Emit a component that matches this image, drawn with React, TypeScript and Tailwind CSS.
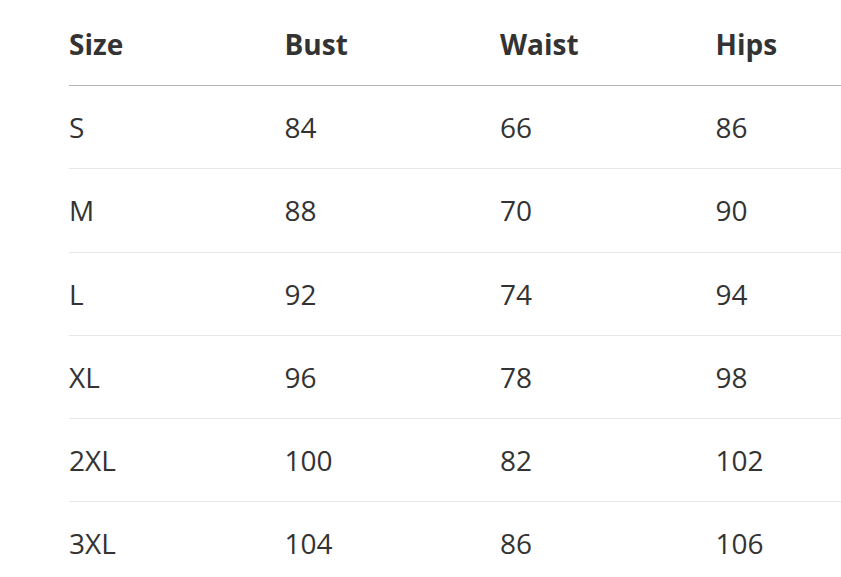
const rows = [
  ['S', '84', '66', '86'],
  ['M', '88', '70', '90'],
  ['L', '92', '74', '94'],
  ['XL', '96', '78', '98'],
  ['2XL', '100', '82', '102'],
  ['3XL', '104', '86', '106'],
];

export default function App() {
  return (
    <div className="h-[577px] w-[841px] overflow-hidden bg-white pl-[69px] pt-[3px] font-['Open_Sans','Noto_Sans',sans-serif] text-[#333]">
      <div className="w-[862px]">
        {/* Header */}
        <div className="grid h-[83px] grid-cols-4 items-center border-b border-[#b5b5b5] text-[28px] font-bold">
          <div>Size</div>
          <div>Bust</div>
          <div>Waist</div>
          <div>Hips</div>
        </div>

        {/* Body */}
        {rows.map((r, i) => (
          <div
            key={i}
            className="grid h-[83.25px] grid-cols-4 items-center border-b border-[#e8e8e8] text-[28px]"
          >
            {r.map((c, j) => (
              <div key={j}>{c}</div>
            ))}
          </div>
        ))}
      </div>
    </div>
  );
}
